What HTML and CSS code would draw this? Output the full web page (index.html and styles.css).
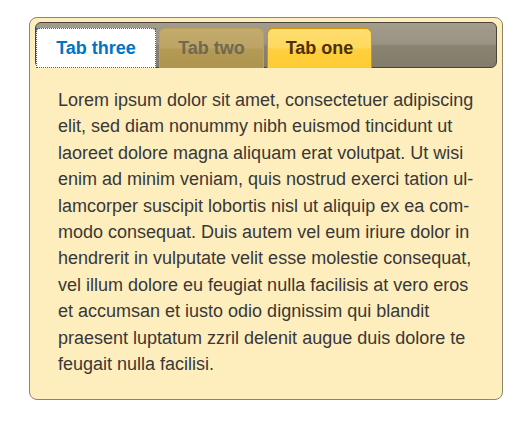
FILE: index.html
```html
<!DOCTYPE html>
<html lang="en">
<head>
<meta charset="utf-8">
<title>Tabs</title>
<link rel="stylesheet" href="styles.css">
</head>
<body>
<div class="tabs">
  <ul class="tab-nav">
    <li class="tab tab-active"><a href="#t3">Tab three</a></li>
    <li class="tab tab-default"><a href="#t2">Tab two</a></li>
    <li class="tab tab-hover"><a href="#t1">Tab one</a></li>
  </ul>
  <div class="panel">
    <p>Lorem ipsum dolor sit amet, consectetuer adipiscing elit, sed diam nonummy nibh euismod tincidunt ut laoreet dolore magna aliquam erat volutpat. Ut wisi enim ad minim veniam, quis nostrud exerci tation ul&shy;lamcorper suscipit lobortis nisl ut aliquip ex ea com&shy;modo consequat. Duis autem vel eum iriure dolor in hendrerit in vulputate velit esse molestie consequat, vel illum dolore eu feugiat nulla facilisis at vero eros et accumsan et iusto odio dignissim qui blandit praesent luptatum zzril delenit augue duis dolore te feugait nulla facilisi.</p>
  </div>
</div>
</body>
</html>
```
FILE: styles.css
```css
html, body {
  margin: 0;
  padding: 0;
  background: #ffffff;
}

body {
  font-family: "Liberation Sans", Arial, sans-serif;
  font-size: 18px;
}

.tabs {
  box-sizing: border-box;
  width: 474px;
  margin: 17px 0 0 29px;
  padding: 4px 5px;
  border: 1px solid #8e846b;
  border-radius: 8px;
  background: #feeebd;
}

.tab-nav {
  list-style: none;
  margin: 0;
  padding: 5px 0 0 0;
  display: flex;
  gap: 3px;
  border: 1px solid #494437;
  border-radius: 6px;
  background: linear-gradient(to bottom, #a39c8d 0%, #9a9384 48%, #8b8371 52%, #847c6a 100%);
}

.tab {
  box-sizing: border-box;
  height: 40px;
  margin-bottom: -1px;
  border: 1px solid transparent;
  border-bottom: 0;
  border-radius: 6px 6px 0 0;
  display: flex;
  justify-content: center;
}

.tab a {
  display: flex;
  align-items: center;
  font-weight: bold;
  font-size: 18px;
  text-decoration: none;
}

.tab-active {
  position: relative;
  width: 120px;
  background: #ffffff;
  border-color: #ffffff;
}

.tab-active a {
  color: #0074c7;
}

.tab-active::after {
  content: "";
  position: absolute;
  left: -1px;
  top: -1px;
  right: -1px;
  bottom: 0;
  border: 1px dotted #0074c7;
  pointer-events: none;
}

.tab-default {
  width: 105px;
  background: linear-gradient(to bottom, #c2ab6c 0%, #bda466 48%, #b39a55 52%, #ae944e 100%);
  border-color: #bca15a;
}

.tab-default a {
  color: #706850;
}

.tab-hover {
  width: 105px;
  background: linear-gradient(to bottom, #fedd70 0%, #fed95f 48%, #fecf3e 52%, #fecb33 100%);
  border-color: #d19405;
}

.tab-hover a {
  color: #4c3000;
}

.panel {
  padding: 19px 23px 18px 23px;
  color: #383838;
}

.panel p {
  margin: 0;
  line-height: 26.4px;
}
```
